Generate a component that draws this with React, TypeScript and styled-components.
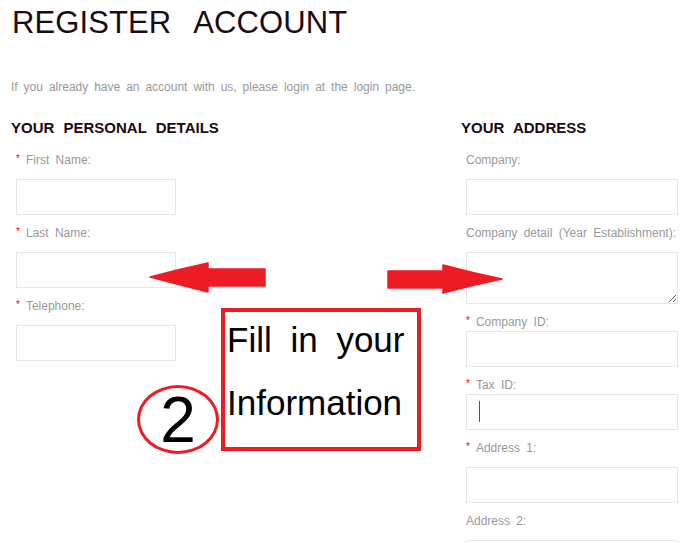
import React from "react";
import styled, { createGlobalStyle } from "styled-components";

const red = "#ed1c24";

const GlobalStyle = createGlobalStyle`
  html, body {
    margin: 0;
    padding: 0;
    background: #ffffff;
  }
  body {
    font-family: "Liberation Sans", Arial, sans-serif;
  }
`;

const Page = styled.div`
  position: relative;
  width: 692px;
  height: 543px;
  overflow: hidden;
  padding-left: 11px;
  box-sizing: border-box;
`;

const Title = styled.h1`
  margin: 0;
  padding-top: 5px;
  padding-left: 1px;
  font-size: 31px;
  line-height: 36px;
  font-weight: normal;
  word-spacing: 15px;
  letter-spacing: 0.1px;
  color: #1c0a14;
`;

const Intro = styled.p`
  margin: 37px 0 0;
  font-size: 12px;
  line-height: 18px;
  word-spacing: 2.6px;
  color: #999999;
`;

const Columns = styled.div`
  display: flex;
  margin-top: 22px;
`;

const Column = styled.div<{ width: number }>`
  width: ${(p) => p.width}px;
  display: flex;
  flex-direction: column;
`;

const SectionTitle = styled.h2`
  margin: 0 0 12px;
  font-size: 15px;
  line-height: 20px;
  font-weight: bold;
  word-spacing: 5px;
  color: #1c0a14;
`;

const Field = styled.div`
  display: flex;
  flex-direction: column;
  padding-left: 5px;
  margin-bottom: 8px;
`;

const Label = styled.label<{ tight?: boolean }>`
  display: flex;
  align-items: center;
  height: 20px;
  margin-bottom: ${(p) => (p.tight ? -1 : 9)}px;
  font-size: 12px;
  word-spacing: 3px;
  color: #999999;
`;

const Star = styled.span`
  color: #ff0000;
  font-size: 10px;
  margin-right: 6px;
  position: relative;
  top: -2px;
`;

const InputWrap = styled.div`
  position: relative;
`;

const TextInput = styled.input<{ w: number }>`
  display: block;
  box-sizing: border-box;
  width: ${(p) => p.w}px;
  height: 36px;
  margin: 0;
  border: 1px solid #e6e6e6;
  background: #ffffff;
  outline: none;
`;

const TextArea = styled.textarea<{ w: number }>`
  display: block;
  box-sizing: border-box;
  width: ${(p) => p.w}px;
  height: 52px;
  margin: 0;
  border: 1px solid #e6e6e6;
  background: #ffffff;
  outline: none;
`;

const Caret = styled.span`
  position: absolute;
  left: 13px;
  top: 7px;
  width: 1px;
  height: 21px;
  background: #555555;
`;

const Arrow = styled.svg<{ x: number; y: number }>`
  position: absolute;
  left: ${(p) => p.x}px;
  top: ${(p) => p.y}px;
  overflow: visible;
`;

const Callout = styled.div`
  position: absolute;
  left: 221px;
  top: 308px;
  width: 200px;
  height: 143px;
  box-sizing: border-box;
  border: 4px solid ${red};
  padding-left: 2px;
  background: #ffffff;
`;

const CalloutLine = styled.div`
  font-size: 35px;
  line-height: 63px;
  color: #000000;
  word-spacing: 9px;
  white-space: nowrap;
  &:first-child {
    margin-top: -4px;
  }
`;

const StepBadge = styled.div`
  position: absolute;
  left: 137px;
  top: 385px;
  width: 82px;
  height: 69px;
  box-sizing: border-box;
  border: 3px solid ${red};
  border-radius: 50%;
  display: flex;
  align-items: center;
  justify-content: center;
  font-size: 64px;
  line-height: 1;
  color: #000000;
`;

type FieldDef = {
  label: string;
  required?: boolean;
  tight?: boolean;
  area?: boolean;
  caret?: boolean;
};

const personal: FieldDef[] = [
  { label: "First Name:", required: true },
  { label: "Last Name:", required: true },
  { label: "Telephone:", required: true },
];

const address: FieldDef[] = [
  { label: "Company:" },
  { label: "Company detail (Year Establishment):", area: true },
  { label: "Company ID:", required: true, tight: true },
  { label: "Tax ID:", required: true, tight: true, caret: true },
  { label: "Address 1:", required: true },
  { label: "Address 2:" },
];

const FormField: React.FC<{ def: FieldDef; w: number }> = ({ def, w }) => (
  <Field>
    <Label tight={def.tight}>
      {def.required && <Star>*</Star>}
      {def.label}
    </Label>
    <InputWrap>
      {def.area ? <TextArea w={w} /> : <TextInput w={w} readOnly />}
      {def.caret && <Caret />}
    </InputWrap>
  </Field>
);

export default function App() {
  return (
    <>
      <GlobalStyle />
      <Page>
        <Title>REGISTER ACCOUNT</Title>
        <Intro>If you already have an account with us, please login at the login page.</Intro>
        <Columns>
          <Column width={450}>
            <SectionTitle>YOUR PERSONAL DETAILS</SectionTitle>
            {personal.map((f) => (
              <FormField key={f.label} def={f} w={160} />
            ))}
          </Column>
          <Column width={231}>
            <SectionTitle>YOUR ADDRESS</SectionTitle>
            {address.map((f) => (
              <FormField key={f.label} def={f} w={212} />
            ))}
          </Column>
        </Columns>

        {/* annotation layer drawn over the form */}
        <Arrow x={150} y={263} width={116} height={30} viewBox="0 0 116 30">
          <path
            d="M0,14 Q30,6 58,0 L58,6 L115,6 L115,23 L58,23 L58,29 Q30,22 0,14 Z"
            fill={red}
            stroke={red}
            strokeWidth={1.5}
            strokeLinejoin="round"
          />
        </Arrow>
        <Arrow x={388} y={265} width={115} height={29} viewBox="0 0 115 29">
          <path
            d="M0,6 L55,6 L55,0 Q85,8 114,14 Q85,20 55,28 L55,23 L0,23 Z"
            fill={red}
            stroke={red}
            strokeWidth={1.5}
            strokeLinejoin="round"
          />
        </Arrow>

        <Callout>
          <CalloutLine>Fill in your</CalloutLine>
          <CalloutLine>Information</CalloutLine>
        </Callout>
        <StepBadge>2</StepBadge>
      </Page>
    </>
  );
}
